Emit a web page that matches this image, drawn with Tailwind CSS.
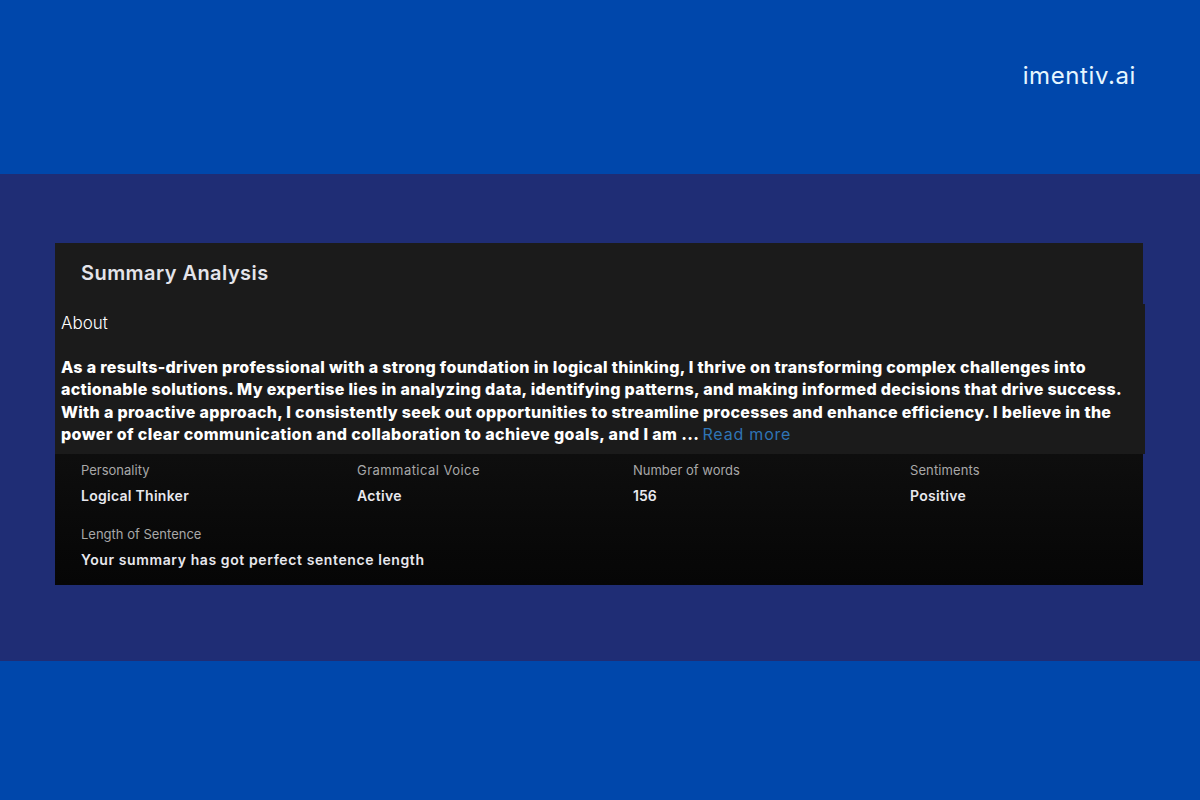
<!DOCTYPE html>
<html lang="en">
<head>
  <meta charset="UTF-8">
  <title>Summary Analysis</title>
  <script src="https://cdn.jsdelivr.net/npm/@tailwindcss/browser@4"></script>
</head>
<body class="bg-[#0047ab] font-['Inter',sans-serif] h-[800px] overflow-hidden">

  <!-- top band -->
  <div class="h-[174px] flex justify-end pr-[64px] pt-[60px]">
    <div class="text-[24px] leading-[32px] text-[#e6f6ff] tracking-[0.6px]">imentiv.ai</div>
  </div>

  <!-- middle band -->
  <div class="h-[487px] bg-[#1f2d75] pt-[69px] pl-[55px]">
    <div class="w-[1088px] h-[342px] flex flex-col bg-gradient-to-b from-[#1c1c1c] via-[#111111] to-[#060606]">
      <div class="h-[61px] shrink-0 pl-[26px] pt-[15px] bg-[#1b1b1b]">
        <h2 class="text-[20px] leading-[30px] font-semibold text-[#e4e4ea] tracking-[0.45px]">Summary Analysis</h2>
      </div>

      <div class="w-[1090px] h-[150px] shrink-0 bg-[#1b1b1b] pl-[6px] pt-[7px] text-white">
        <p class="text-[17px] leading-[24px] font-light">About</p>
        <p class="mt-[21px] text-[16px] leading-[22.25px] font-extrabold tracking-[0.32px] whitespace-nowrap">As a results-driven professional with a strong foundation in logical thinking, I thrive on transforming complex challenges into<br>actionable solutions. My expertise lies in analyzing data, identifying patterns, and making informed decisions that drive success.<br>With a proactive approach, I consistently seek out opportunities to streamline processes and enhance efficiency. I believe in the<br><span class="tracking-[0.39px]">power of clear communication and collaboration to achieve goals, and I am ... </span><span class="font-normal text-[#2f74b5] tracking-[0.8px]">Read more</span></p>
      </div>

      <div class="pl-[26px] pt-[7px]">
        <div class="grid grid-cols-[276px_276px_276px_1fr]">
          <div>
            <div class="text-[13px] leading-[18px] text-[#a8a8a8]">Personality</div>
            <div class="mt-[7px] text-[14px] leading-[20px] font-semibold text-[#e8e8ee] tracking-[0.27px]">Logical Thinker</div>
          </div>
          <div>
            <div class="text-[13px] leading-[18px] text-[#a8a8a8] tracking-[0.45px]">Grammatical Voice</div>
            <div class="mt-[7px] text-[14px] leading-[20px] font-semibold text-[#e8e8ee] tracking-[0.3px]">Active</div>
          </div>
          <div>
            <div class="text-[13px] leading-[18px] text-[#a8a8a8]">Number of words</div>
            <div class="mt-[7px] text-[14px] leading-[20px] font-semibold text-[#e8e8ee]">156</div>
          </div>
          <div class="pl-px">
            <div class="text-[13px] leading-[18px] text-[#a8a8a8] tracking-[0.1px]">Sentiments</div>
            <div class="mt-[7px] text-[14px] leading-[20px] font-semibold text-[#e8e8ee] tracking-[0.3px]">Positive</div>
          </div>
        </div>
        <div class="mt-[19px]">
          <div class="text-[13px] leading-[18px] text-[#a8a8a8]">Length of Sentence</div>
          <div class="mt-[7px] text-[14px] leading-[20px] font-semibold text-[#e8e8ee] tracking-[0.6px]">Your summary has got perfect sentence length</div>
        </div>
      </div>
    </div>
  </div>

</body>
</html>
